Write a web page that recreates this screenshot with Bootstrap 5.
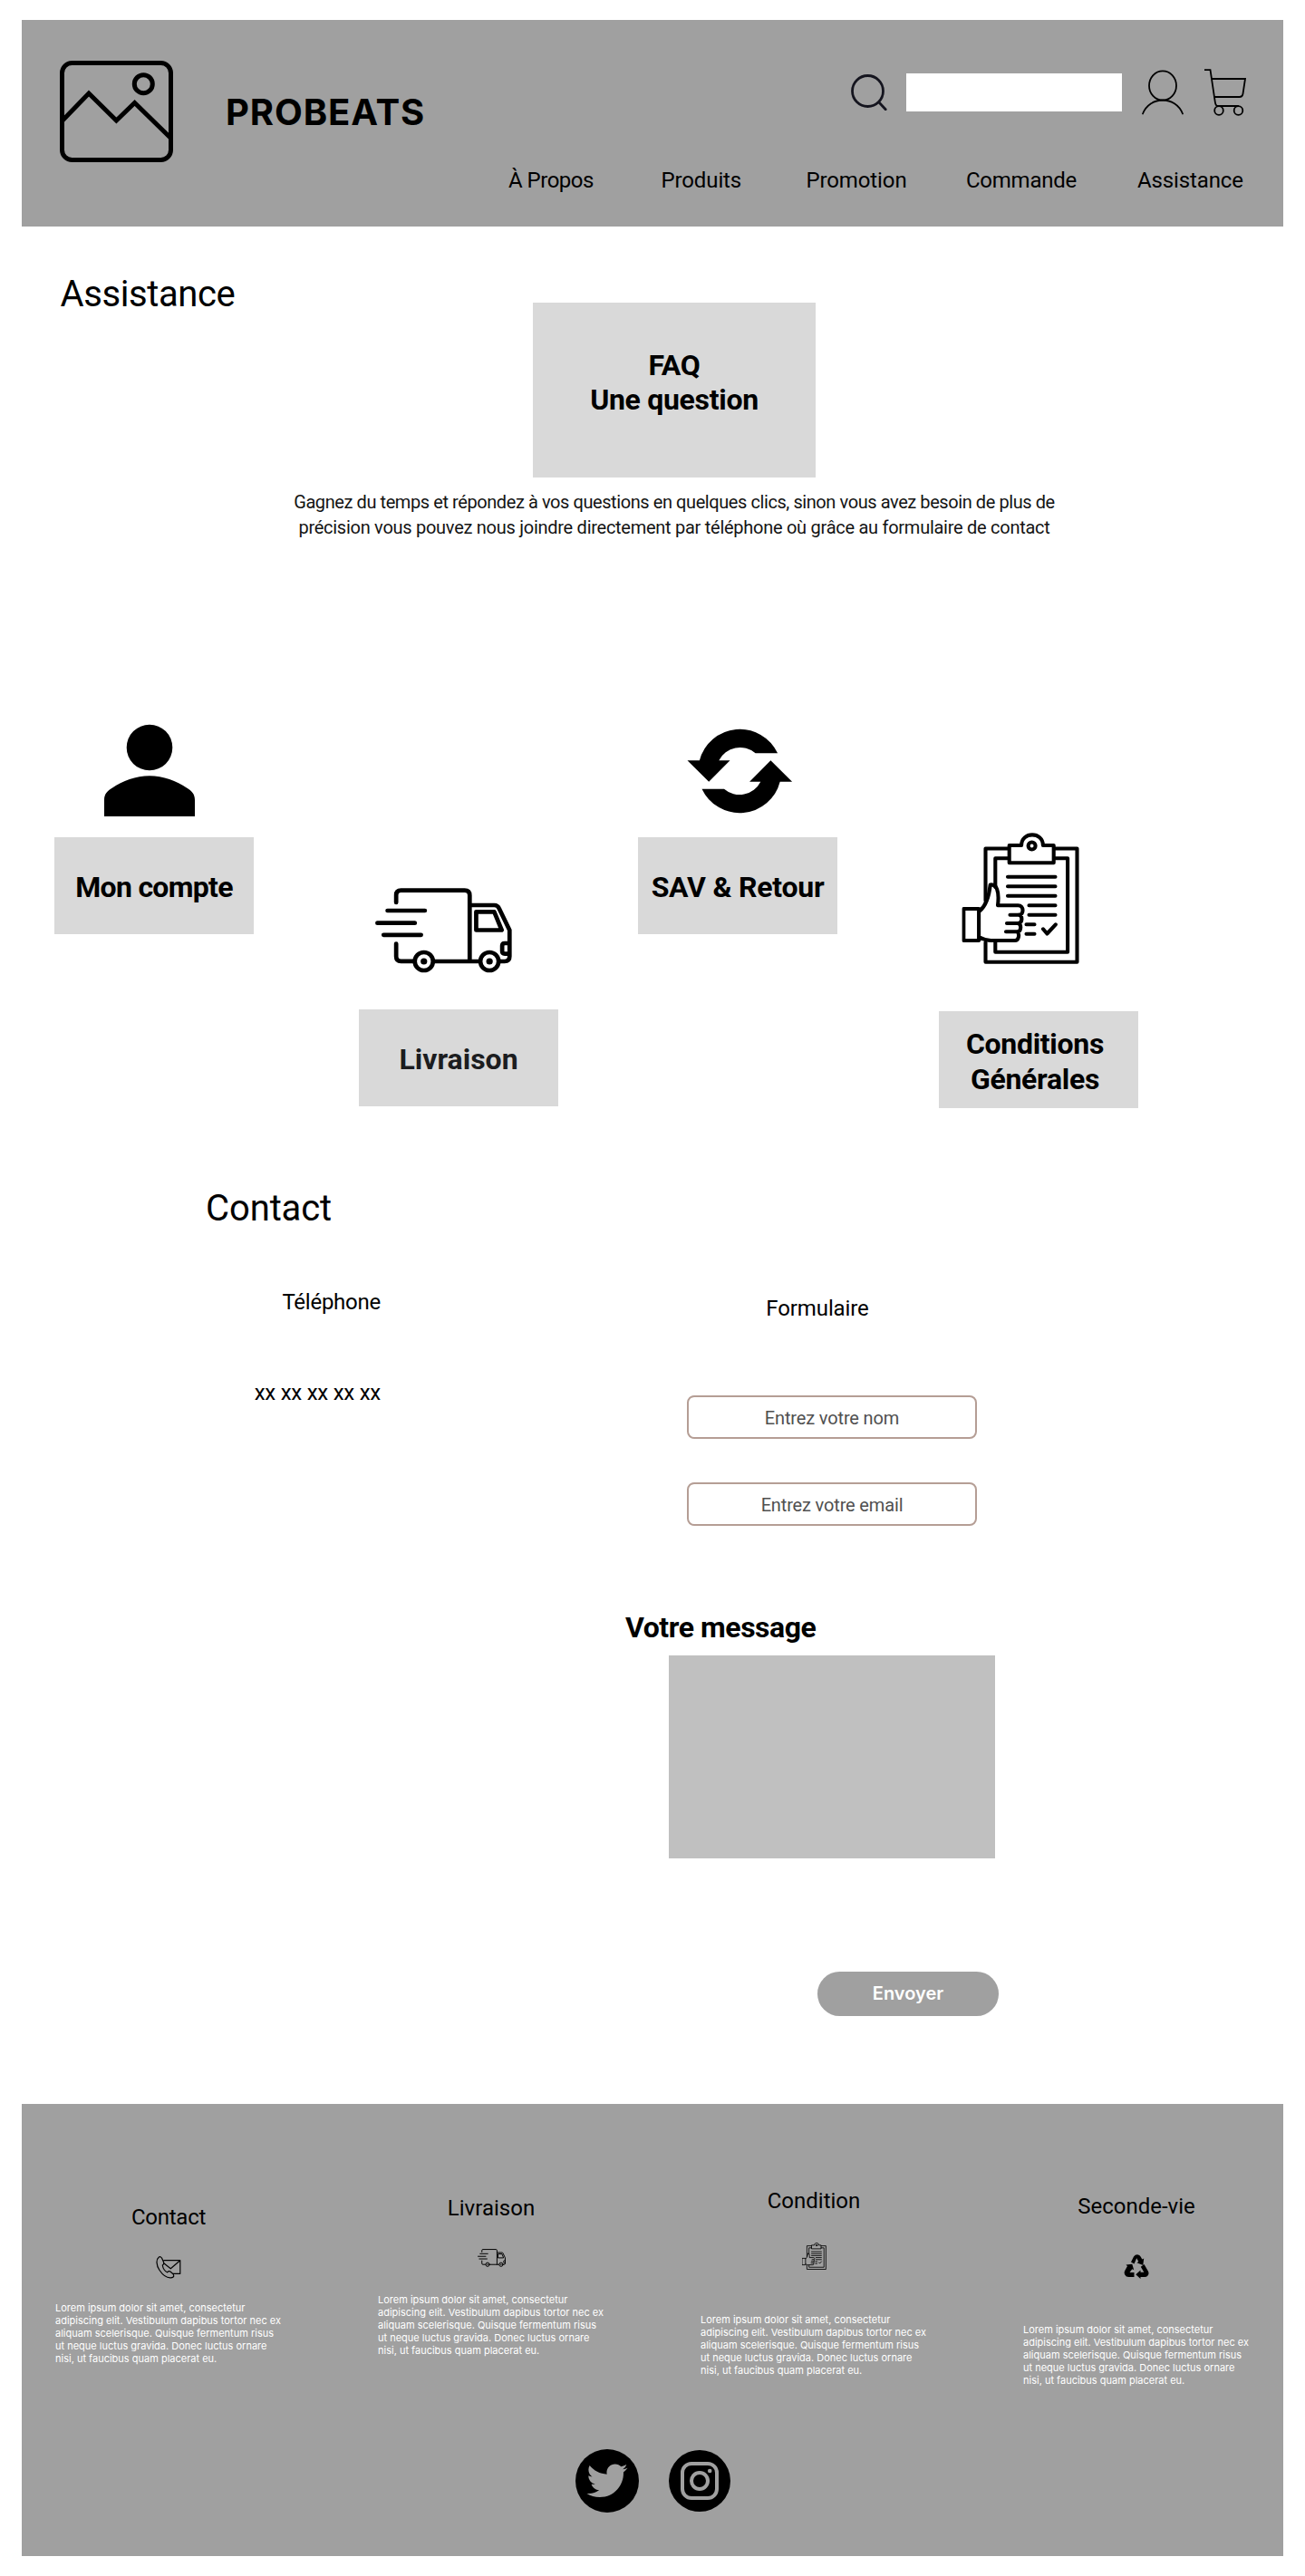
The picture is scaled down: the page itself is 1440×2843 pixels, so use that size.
<!DOCTYPE html>
<html lang="fr">
<head>
<meta charset="utf-8">
<meta name="viewport" content="width=device-width, initial-scale=1">
<title>Probeats - Assistance</title>
<link href="https://cdn.jsdelivr.net/npm/bootstrap@5.3.0/dist/css/bootstrap.min.css" rel="stylesheet">
<style>
body{font-family:Roboto,"Liberation Sans",sans-serif;color:#000;background:#fff;width:1440px}
svg{display:block;flex:none}
.band{background:#a0a0a0;width:1392px;margin-left:24px}
.site-head{margin-top:22px;height:228px;padding:45px 41px 0 41.5px}
.brand-name{font:700 40px/48px Inter,sans-serif;letter-spacing:.9px;margin:32.5px 0 0 58.5px}
.tools{margin-top:9px;height:52px}
.search-box{width:238px;height:42px;border:0;border-radius:0;margin:0 22.500px 0 21px;padding:0 12px;background:#fff}
.main-nav{display:grid;grid-template-columns:168.500px 160px 176.500px 189px 120px;margin:56.5px 0 0}
.main-nav a,.t24{font-size:24px;line-height:28px;font-weight:400;color:#000;text-decoration:none;white-space:nowrap}
.ls3{letter-spacing:-.12px}.ls4{letter-spacing:-.25px}.ls6{letter-spacing:-.5px}
.t40{font-size:40px;line-height:48px;font-weight:400;margin:0}
.t32{font-size:32px;line-height:38.4px;font-weight:700;margin:0}
.help-top{padding:51px 0 0 66.5px}
.page-title{width:521.5px;letter-spacing:-.4px}
.faq-box{width:312px;height:193px;margin-top:33px;padding-top:50px;background:#d9d9d9;letter-spacing:-.3px}
.intro{width:1488px;margin:13px 0 0;font-size:20px;line-height:28px;color:#141414;letter-spacing:-.42px}
.intro span{letter-spacing:-.27px}
.tiles{padding-left:60px;margin-top:203.400px;height:510.600px}
.tile-col{width:220px}
.tile-box{height:106.5px;background:#d9d9d9;padding-top:4px}
.contact-title{margin-left:227px;letter-spacing:-.1px}
.phone-col{width:420px;padding-top:65.5px}
.form-col{width:412px;margin-left:270px;padding-top:72px}
.field{width:320px;height:48.5px;margin-left:68px;border:2px solid #b59e95;border-radius:8px;text-align:center;font-size:20px;line-height:28px;padding:8px 0 6px;letter-spacing:-.15px;color:#505050}
.field::placeholder{color:#505050;opacity:1}
.msg{width:360px;height:223.5px;margin:11.200px 0 0 48px;border:0;border-radius:0;background:#c0c0c0;resize:none}
.send{width:200px;height:48.5px;margin:125.500px 0 0 212px;border:0;background:#a0a0a0;color:#fff;font:600 20px/24px Inter,sans-serif;padding:0}
.site-foot{height:499px;margin-top:97.300px}
.foot-cols{height:381px;padding-left:37px}
.foot-col{flex:none;width:250px;margin-right:106px}
.foot-col p{font:400 11px/14px Inter,sans-serif;color:#fff;white-space:nowrap;margin:0;align-self:flex-start}
.f1{padding-top:111px}.f1 svg{margin:29px 0 25.5px}
.f2{padding-top:101px}.f2 svg{margin:31px 0 29px}
.f3{padding-top:93px}.f3 svg{margin:32px 0 48px}
.f4{padding-top:99px}.f4 svg{margin:39px 0 49.5px}
.social{padding-left:611px;gap:33px}
</style>
<script src="https://cdn.jsdelivr.net/npm/bootstrap@5.3.0/dist/js/bootstrap.bundle.min.js"></script>
</head>
<body>
<svg width="0" height="0" class="position-absolute" aria-hidden="true">
  <symbol id="truck" viewBox="0 0 150 94" preserveAspectRatio="none">
    <g fill="none" stroke="currentColor" stroke-width="4.7" stroke-linecap="round" stroke-linejoin="round">
      <path d="M23 16V8q0-5.3 5.3-5.3H98q5.6 0 5.6 5.6V81M13.5 25H54.5M2.4 38.7H43.5M9.2 51.8H50.3M23 61.5V75.5q0 5.3 5.3 5.3H42M64 81H114.500M103.600 19H130.500q4 0 5.500 4L147.300 46.500V75.500q0 5.500-5.500 5.500H137M110.700 26.300H130.500L138.700 46.500H110.700ZM147 61H142q-2.800 0-2.800 2.800V69.800q0 2.800 2.800 2.800H147"/>
      <circle cx="53.4" cy="81" r="10"/><circle cx="125.3" cy="81" r="10"/>
    </g>
    <circle cx="53.4" cy="81" r="3.6"/><circle cx="125.3" cy="81" r="3.600"/>
  </symbol>
  <symbol id="clipboard" viewBox="0 0 130 145" preserveAspectRatio="none">
    <g fill="none" stroke="currentColor" stroke-width="4.1" stroke-linecap="round" stroke-linejoin="round">
      <path d="M51 17.500H26V75M26 121V142.700H127V17.500H102M51 28.300H36.800V60M36.800 121V131.700H116.600V28.300H102"/>
      <path d="M52.200 14H65.600C65.600 -1.500 89.400 -1.500 89.400 14H101.200V33.300H52.200Z"/><circle cx="77.100" cy="14.500" r="4"/>
      <path d="M50.500 48.700H103M50.500 59.300H103M50.500 69.700H103M74 80.200H103M74 90.800H103M71 101.200H80M71 111.700H80M89.500 106.300L93.900 111.500L103.300 101.300"/>
      <path d="M1.800 84H18.600V119H1.800ZM19.500 86.500C27 80 30 70 31.200 57.500C38 56.500 41.500 64 39.500 80.200H62C68.500 80.200 68.500 90.700 63 90.700H53M63 90.700C67 92 67 99.500 62 100H49.500M62 100C66 101.500 65.500 109 61 109.300H48.500M61 109.300C64 112 62.500 119 58.500 119H32Q26 119 19.500 115.500"/>
    </g>
  </symbol>
</svg>

<header class="band site-head d-flex align-items-start">
  <svg width="125" height="112" viewBox="0 0 125 112" fill="none" stroke="#000" stroke-width="5"><rect x="2.500" y="2.500" width="120" height="107" rx="11"/><circle cx="92.300" cy="25.700" r="10"/><path d="M2.500 66.500L32 36L62.400 66L82.600 46.500L122 85"/></svg>
  <div class="brand-name">PROBEATS</div>
  <div class="ms-auto">
    <div class="tools d-flex justify-content-end align-items-center">
      <svg width="40" height="40" viewBox="0 0 40 40" fill="none" stroke="#15151f" stroke-width="2.800" stroke-linecap="round"><circle cx="18.500" cy="18.500" r="17"/><path d="M31 31L38.200 38.700"/></svg>
      <input class="search-box" type="search" aria-label="Rechercher">
      <svg width="46" height="50" viewBox="0 0 46 50" fill="none" stroke="#000" stroke-width="1.800" stroke-linecap="round"><ellipse cx="23" cy="17.500" rx="15" ry="16.200"/><path d="M1 48.500C9 28.500 37 28.500 45 48.500"/></svg>
      <svg style="margin-left:23px" width="46" height="52" viewBox="0 0 46 52" fill="none" stroke="#000" stroke-width="1.800"><path d="M0 1.200H6.500L11.800 36.500Q12.300 41 15 41H38M8 11H45L42.500 27.500Q42 31 38.500 31H11"/><circle cx="16" cy="46" r="4.800"/><circle cx="37.500" cy="46" r="4.800"/></svg>
    </div>
    <nav class="main-nav">
      <a href="#" class="ls6">À Propos</a><a href="#" class="ls3">Produits</a><a href="#" class="ls3">Promotion</a><a href="#" class="ls4">Commande</a><a href="#" class="ls3">Assistance</a>
    </nav>
  </div>
</header>

<main>
  <section class="help-top d-flex">
    <h1 class="t40 page-title">Assistance</h1>
    <div class="faq-box t32 text-center">FAQ<br>Une question</div>
  </section>
  <p class="intro text-center">Gagnez du temps et répondez à vos questions en quelques clics, sinon vous avez besoin de plus de<br><span>précision vous pouvez nous joindre directement par téléphone où grâce au formulaire de contact</span></p>

  <section class="tiles d-flex align-items-start">
    <div class="tile-col">
      <svg width="220" height="125" viewBox="0 0 220 125"><circle cx="105" cy="26" r="25.300"/><path d="M55 102V84C55 77 58.500 74 64 70.500C75 63 90 57.300 105 57.300S135 63 146 70.500C151.500 74 155 77 155 84V102Z"/></svg>
      <div class="tile-box t32 d-flex align-items-center justify-content-center" style="letter-spacing:-.7px">Mon compte</div>
    </div>
    <div class="tile-col" style="margin:181px 88px 0 116px">
      <svg class="ms-3" width="153" height="134" viewBox="0 0 153 134"><use href="#truck" x="2" width="151" height="94"/></svg>
      <div class="tile-box t32 d-flex align-items-center justify-content-center" style="color:#1c1d1f">Livraison</div>
    </div>
    <div class="tile-col">
      <svg width="220" height="125" viewBox="-54.500 -5 220 125"><path id="turn" d="M13.400 35.300A46 46 0 0 1 99.600 27.300H75.100A26 26 0 0 0 34.800 35.300H47L23.700 58.700L0 35.300Z"/><use href="#turn" transform="rotate(180 57.800 47)"/></svg>
      <div class="tile-box t32 d-flex align-items-center justify-content-center" style="letter-spacing:-.25px">SAV &amp; Retour</div>
    </div>
    <div class="tile-col" style="margin:120px 0 0 112px">
      <svg width="220" height="197" viewBox="0 0 220 197"><use href="#clipboard" x="25.500" width="130" height="145"/></svg>
      <div class="tile-box t32 d-flex align-items-center justify-content-center text-center pe-2" style="letter-spacing:-.3px">Conditions<br>Générales</div>
    </div>
  </section>

  <section>
    <h2 class="t40 contact-title">Contact</h2>
    <div class="d-flex align-items-start">
      <div class="phone-col d-flex flex-column align-items-end">
        <div class="t24 ls4">Téléphone</div>
        <div class="t24 ls4" style="margin-top:72px">xx xx xx xx xx</div>
      </div>
      <form class="form-col">
        <div class="t24 ls3 text-center" style="width:424px">Formulaire</div>
        <input class="form-control field" style="margin-top:82px" type="text" placeholder="Entrez votre nom" aria-label="Nom">
        <input class="form-control field" style="margin-top:47.5px" type="email" placeholder="Entrez votre email" aria-label="Email">
        <label class="t32 d-block" for="msg" style="margin-top:93px;letter-spacing:-.45px">Votre message</label>
        <textarea class="form-control msg" id="msg"></textarea>
        <button class="btn rounded-pill send d-block" type="button">Envoyer</button>
      </form>
    </div>
  </section>
</main>

<footer class="band site-foot">
  <div class="foot-cols d-flex">
    <div class="foot-col f1 d-flex flex-column align-items-center">
      <div class="t24 ls4">Contact</div>
      <svg width="28" height="25" viewBox="0 0 28 25" fill="none" stroke="#000" stroke-width="1.200" stroke-linejoin="round"><path d="M8.500 4.700H26.800V19.300H19M9 8L16.300 13.800L26.500 5M3.400 .9C0 3.500 .3 10 4 15.500S12 24.200 16.500 23.800S19.800 21 18.800 19.500L15.600 16.800Q14 16.200 12.600 17.800C9.800 16.500 7.800 13 7.300 10Q9.300 8.700 8.500 6.500L6.500 2Q5 0 3.400 .9Z"/></svg>
      <p>Lorem ipsum dolor sit amet, consectetur<br>adipiscing elit. Vestibulum dapibus tortor nec ex<br>aliquam scelerisque. Quisque fermentum risus<br>ut neque luctus gravida. Donec luctus ornare<br>nisi, ut faucibus quam placerat eu.</p>
    </div>
    <div class="foot-col f2 d-flex flex-column align-items-center">
      <div class="t24">Livraison</div>
      <svg width="31" height="20"><use href="#truck" width="31" height="20"/></svg>
      <p>Lorem ipsum dolor sit amet, consectetur<br>adipiscing elit. Vestibulum dapibus tortor nec ex<br>aliquam scelerisque. Quisque fermentum risus<br>ut neque luctus gravida. Donec luctus ornare<br>nisi, ut faucibus quam placerat eu.</p>
    </div>
    <div class="foot-col f3 d-flex flex-column align-items-center">
      <div class="t24">Condition</div>
      <svg width="27" height="30"><use href="#clipboard" width="27" height="30"/></svg>
      <p>Lorem ipsum dolor sit amet, consectetur<br>adipiscing elit. Vestibulum dapibus tortor nec ex<br>aliquam scelerisque. Quisque fermentum risus<br>ut neque luctus gravida. Donec luctus ornare<br>nisi, ut faucibus quam placerat eu.</p>
    </div>
    <div class="foot-col f4 d-flex flex-column align-items-center">
      <div class="t24">Seconde-vie</div>
      <svg width="28" height="27" viewBox="0 0 28 27"><path d="M8 8.500L11 2.500Q12.500 .3 15 .3Q17.600 .5 18.800 2.800L20.300 5.500L22.200 4.500L21.300 12L14.500 9.200L16.300 8.100L14.200 4.300L11.500 10.500ZM2.500 11.500L9.300 10.800L11.200 17.200L9.300 16.300L6.500 20H11.500V25H5.500Q2.500 25 1.200 22.500T1.500 17.500L4 13ZM22.500 11L27 18.800Q28.200 21.500 26.500 23.500Q25.300 25 23 25H18.500V27L13.300 22.300L18.500 17.500V19.800H22.300L18.800 13.700Z"/></svg>
      <p>Lorem ipsum dolor sit amet, consectetur<br>adipiscing elit. Vestibulum dapibus tortor nec ex<br>aliquam scelerisque. Quisque fermentum risus<br>ut neque luctus gravida. Donec luctus ornare<br>nisi, ut faucibus quam placerat eu.</p>
    </div>
  </div>
  <div class="social d-flex align-items-center">
    <svg width="70" height="70" viewBox="0 0 70 70"><circle cx="35" cy="35" r="35"/><path fill="#a0a0a0" transform="translate(12.500 12.200) scale(.088)" d="M459.370 151.716c.325 4.548.325 9.097.325 13.645 0 138.720-105.583 298.558-298.558 298.558-59.452 0-114.680-17.219-161.137-47.106 8.447.974 16.568 1.299 25.340 1.299 49.055 0 94.213-16.568 130.274-44.832-46.132-.975-84.792-31.188-98.112-72.772 6.498.974 12.995 1.624 19.818 1.624 9.421 0 18.843-1.300 27.614-3.573-48.081-9.747-84.143-51.980-84.143-102.985v-1.299c13.969 7.797 30.214 12.670 47.431 13.319-28.264-18.843-46.781-51.005-46.781-87.391 0-19.492 5.197-37.360 14.294-52.954 51.655 63.675 129.300 105.258 216.365 109.807-1.624-7.797-2.599-15.918-2.599-24.040 0-57.828 46.782-104.934 104.934-104.934 30.213 0 57.502 12.670 76.670 33.137 23.715-4.548 46.456-13.320 66.599-25.340-7.798 24.366-24.366 44.833-46.132 57.827 21.117-2.273 41.584-8.122 60.426-16.243-14.292 20.791-32.161 39.308-52.628 54.253z"/></svg>
    <svg width="68" height="68" viewBox="0 0 68 68"><circle cx="34" cy="34" r="34"/><g fill="none" stroke="#a0a0a0" stroke-width="4"><rect x="15" y="15" width="38" height="38" rx="10"/><circle cx="34" cy="34" r="9"/></g><circle cx="45.200" cy="23" r="2.300" fill="#a0a0a0"/></svg>
  </div>
</footer>
<div style="height:22px"></div>
</body>
</html>
